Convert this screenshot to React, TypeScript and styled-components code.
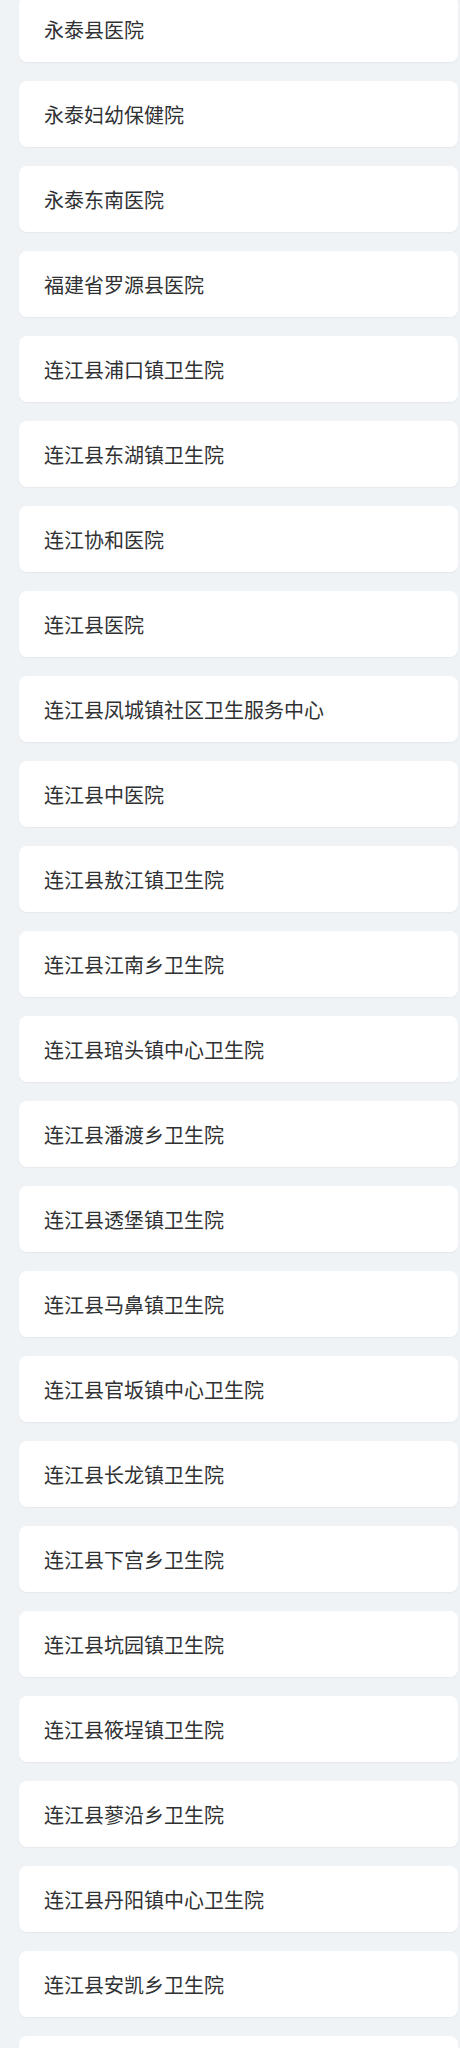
import styled, { createGlobalStyle } from "styled-components";

const hospitals = [
  "永泰县医院",
  "永泰妇幼保健院",
  "永泰东南医院",
  "福建省罗源县医院",
  "连江县浦口镇卫生院",
  "连江县东湖镇卫生院",
  "连江协和医院",
  "连江县医院",
  "连江县凤城镇社区卫生服务中心",
  "连江县中医院",
  "连江县敖江镇卫生院",
  "连江县江南乡卫生院",
  "连江县琯头镇中心卫生院",
  "连江县潘渡乡卫生院",
  "连江县透堡镇卫生院",
  "连江县马鼻镇卫生院",
  "连江县官坂镇中心卫生院",
  "连江县长龙镇卫生院",
  "连江县下宫乡卫生院",
  "连江县坑园镇卫生院",
  "连江县筱埕镇卫生院",
  "连江县蓼沿乡卫生院",
  "连江县丹阳镇中心卫生院",
  "连江县安凯乡卫生院",
];

function App() {
  return (
    <>
      <GlobalStyle />
      <List>
        {hospitals.map((name) => (
          <Card key={name}>{name}</Card>
        ))}
        {/* next row, only its top edge shows */}
        <Card />
      </List>
    </>
  );
}

export default App;

const GlobalStyle = createGlobalStyle`
  html, body {
    margin: 0;
    background: #f0f3f6;
    overflow: hidden;
  }
  body {
    font-family: "Noto Sans CJK SC", "Noto Sans", sans-serif;
  }
`;

const List = styled.div`
  display: flex;
  flex-direction: column;
  gap: 19px;
  margin-top: -4px;
  padding: 0 2px 0 19px;
`;

const Card = styled.div`
  height: 66px;
  flex-shrink: 0;
  box-sizing: border-box;
  display: flex;
  align-items: center;
  padding-left: 25px;
  background: #ffffff;
  border-radius: 8px;
  box-shadow: 0 1px 2px rgba(30, 50, 80, 0.06);
  font-size: 20px;
  font-weight: 400;
  color: #303133;
`;
